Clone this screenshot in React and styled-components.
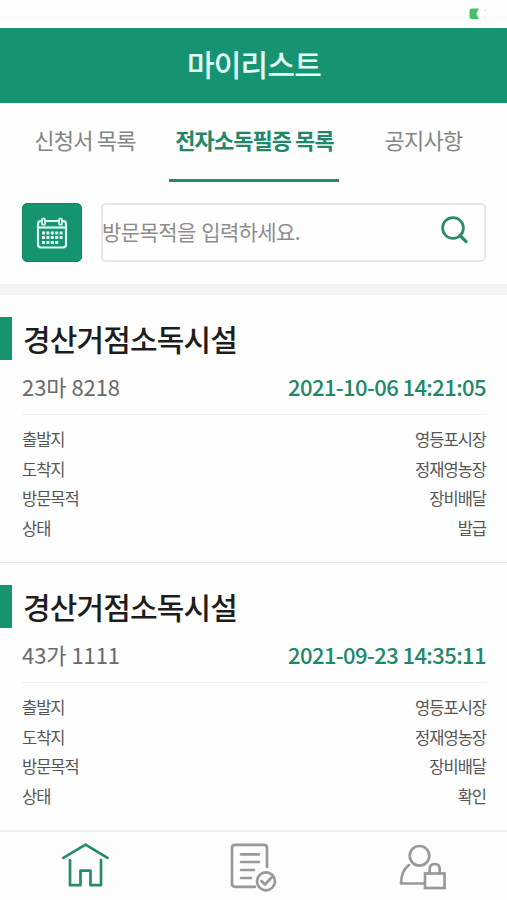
import React from "react";
import styled, { createGlobalStyle } from "styled-components";

const GREEN = "#169371";

const GlobalStyle = createGlobalStyle`
  * { box-sizing: border-box; }
  body {
    margin: 0;
    background: #fefefe;
    font-family: "Noto Sans CJK KR", "Noto Sans", sans-serif;
  }
`;

const Screen = styled.div`
  display: flex;
  flex-direction: column;
  width: 507px;
  height: 900px;
  overflow: hidden;
  background: #fefefe;
  white-space: nowrap;
`;

const StatusBar = styled.div`
  flex: none;
  display: flex;
  justify-content: flex-end;
  height: 28px;
  padding: 8px 19px 0 0;
`;

const Header = styled.header`
  flex: none;
  height: 75px;
  background: ${GREEN};
  color: #e2fff6;
  display: flex;
  justify-content: center;
`;

const Title = styled.h1`
  margin: 0;
  padding-left: 1px;
  font-size: 30px;
  font-weight: 500;
  line-height: 70px;
  letter-spacing: -0.75px;
`;

const Tabs = styled.nav`
  flex: none;
  display: grid;
  grid-template-columns: 169px 170px 168px;
  height: 79px;
`;

const Tab = styled.div`
  padding-left: 1px;
  text-align: center;
  font-size: 22px;
  line-height: 72px;
  letter-spacing: ${(p) => (p.$active ? "-0.95px" : "-0.75px")};
  font-weight: ${(p) => (p.$active ? 700 : 400)};
  color: ${(p) => (p.$active ? "#208868" : "#848484")};
  border-bottom: 3px solid ${(p) => (p.$active ? "#27896a" : "transparent")};
`;

const SearchRow = styled.div`
  flex: none;
  display: flex;
  gap: 19px;
  height: 102px;
  padding: 21px 21px 0 22px;
`;

const DateButton = styled.button`
  display: flex;
  align-items: center;
  justify-content: center;
  width: 60px;
  height: 59px;
  padding: 0;
  border: 1px solid #158461;
  border-radius: 5px;
  background: ${GREEN};
`;

const SearchBox = styled.div`
  flex: 1;
  display: flex;
  align-items: flex-start;
  justify-content: space-between;
  height: 59px;
  padding-right: 15px;
  border: 2px solid #e6e6e6;
  border-radius: 5px;
`;

const Placeholder = styled.span`
  margin-left: -1px;
  font-size: 21px;
  line-height: 52px;
  letter-spacing: -0.6px;
  word-spacing: 1.5px;
  color: #8d8d8d;
`;

const Divider = styled.div`
  flex: none;
  height: 11px;
  background: #f3f3f3;
`;

const Card = styled.article`
  flex: none;
  height: 268px;
  padding: 21px 21px 0 0;
  border-bottom: 1px solid #e6e6e6;
`;

const CardHeading = styled.div`
  display: flex;
  align-items: center;
  height: 44px;
  gap: 11px;
`;

const Marker = styled.span`
  width: 12px;
  height: 43px;
  background: ${GREEN};
`;

const Facility = styled.h2`
  margin: 0;
  font-size: 30px;
  line-height: 42px;
  font-weight: 500;
  letter-spacing: -0.85px;
  color: #1d1d1d;
`;

const Summary = styled.div`
  display: flex;
  justify-content: space-between;
  height: 55px;
  margin-left: 22px;
  border-bottom: 1px solid #f0f0f0;
  font-size: 22px;
  line-height: 52px;
`;

const Plate = styled.span`
  color: #6a6a6a;
  letter-spacing: -0.05px;
`;

const Stamp = styled.time`
  color: #208868;
  font-weight: 500;
  letter-spacing: -0.6px;
`;

const Details = styled.dl`
  margin: 10px 0 0 22px;
`;

const Detail = styled.div`
  display: flex;
  justify-content: space-between;
  height: 29.7px;
  font-size: 16.5px;
  font-weight: 400;
  line-height: 29.7px;
  letter-spacing: -1px;
  color: #555555;
`;

const Term = styled.dt`
  margin: 0;
`;

const Value = styled.dd`
  margin: 0;
`;

const BottomBar = styled.nav`
  flex: none;
  display: grid;
  grid-template-columns: repeat(3, 169px);
  height: 71px;
  margin-top: -1px;
  border-top: 2px solid #f0f0f0;
  background: #fdfdfd;
`;

const NavItem = styled.div`
  display: flex;
  justify-content: center;
  color: ${(p) => (p.$active ? "#268a6b" : "#999999")};
`;

const Line = styled.svg`
  flex: none;
  fill: none;
  stroke: currentColor;
  stroke-width: 2.7;
  stroke-linecap: round;
  stroke-linejoin: round;
`;

const SearchGlyph = styled(Line)`
  margin-top: 11px;
`;

const BatteryIcon = () => (
  <svg width="20" height="12" viewBox="0 0 20 12">
    <path d="M4 0.5h7L8.3 6l2.7 5H4q-2.5 0-2.5-2V2.5q0-2 2.5-2z" fill="#47bf67" />
    <path d="M17 2v1M17 9v1" stroke="#b8dccb" strokeWidth="1.2" />
  </svg>
);

const CalendarIcon = () => (
  <svg width="32" height="32" viewBox="0 0 32 32" fill="none" stroke="#dcfff2">
    <rect x="2" y="4" width="28" height="26.5" rx="3" strokeWidth="2.2" />
    <path d="M2 10.5h28" strokeWidth="2.2" />
    <rect x="6" y="1.7" width="3" height="6" rx="1" fill="#169371" strokeWidth="1.7" />
    <rect x="23" y="1.7" width="3" height="6" rx="1" fill="#169371" strokeWidth="1.7" />
    <path d="M6 16h21M6 20.5h21M6 25.5h17" strokeWidth="3.2" strokeDasharray="3 1.4" />
  </svg>
);

const SearchIcon = () => (
  <SearchGlyph width="28" height="30" viewBox="0 0 28 30" color="#2b8b6c">
    <circle cx="12" cy="12" r="10.4" />
    <path d="M19 19.5l6 6" strokeWidth="3.2" />
  </SearchGlyph>
);

const HomeIcon = () => (
  <Line width="50" height="56" viewBox="0 0 50 56">
    <path d="M3.3 25.9L25.5 12.7l22 13.2M10 28v25.2h10.5V38.7h10v14.5H41V28" />
  </Line>
);

const DocumentIcon = () => (
  <Line width="50" height="60" viewBox="0 0 50 60">
    <path d="M26 54.8H6q-3 0-3-3V15.8q0-3 3-3h29q3 0 3 3V35" />
    <path d="M12 22.3h18M12 30h18M12 38h13M12 46h10" />
    <circle cx="37" cy="49.3" r="9" />
    <path d="M32.5 49l3.5 3.5 6.5-7" />
  </Line>
);

const UserLockIcon = () => (
  <Line width="50" height="60" viewBox="0 0 50 60">
    <circle cx="21.5" cy="23.8" r="9.8" />
    <path d="M11 33Q3 39 3 51.5H26" />
    <g strokeLinejoin="miter">
      <rect x="27" y="41.5" width="19.5" height="14.5" />
      <path d="M31.7 41v-4q0-5 5-5t5 5v4" />
    </g>
  </Line>
);

const records = [
  { plate: "23마 8218", time: "2021-10-06 14:21:05", status: "발급" },
  { plate: "43가 1111", time: "2021-09-23 14:35:11", status: "확인" },
];

const detailsOf = (record) => [
  ["출발지", "영등포시장"],
  ["도착지", "정재영농장"],
  ["방문목적", "장비배달"],
  ["상태", record.status],
];

const RecordCard = ({ record }) => (
  <Card>
    <CardHeading>
      <Marker />
      <Facility>경산거점소독시설</Facility>
    </CardHeading>
    <Summary>
      <Plate>{record.plate}</Plate>
      <Stamp>{record.time}</Stamp>
    </Summary>
    <Details>
      {detailsOf(record).map(([term, value]) => (
        <Detail key={term}>
          <Term>{term}</Term>
          <Value>{value}</Value>
        </Detail>
      ))}
    </Details>
  </Card>
);

export default function App() {
  return (
    <>
      <GlobalStyle />
      <Screen>
        <StatusBar><BatteryIcon /></StatusBar>
        <Header><Title>마이리스트</Title></Header>
        <Tabs>
          <Tab>신청서 목록</Tab>
          <Tab $active>전자소독필증 목록</Tab>
          <Tab>공지사항</Tab>
        </Tabs>
        <SearchRow>
          <DateButton aria-label="날짜 선택"><CalendarIcon /></DateButton>
          <SearchBox>
            <Placeholder>방문목적을 입력하세요.</Placeholder>
            <SearchIcon />
          </SearchBox>
        </SearchRow>
        <Divider />
        {records.map((record) => <RecordCard key={record.plate} record={record} />)}
        <BottomBar>
          <NavItem $active><HomeIcon /></NavItem>
          <NavItem><DocumentIcon /></NavItem>
          <NavItem><UserLockIcon /></NavItem>
        </BottomBar>
      </Screen>
    </>
  );
}
